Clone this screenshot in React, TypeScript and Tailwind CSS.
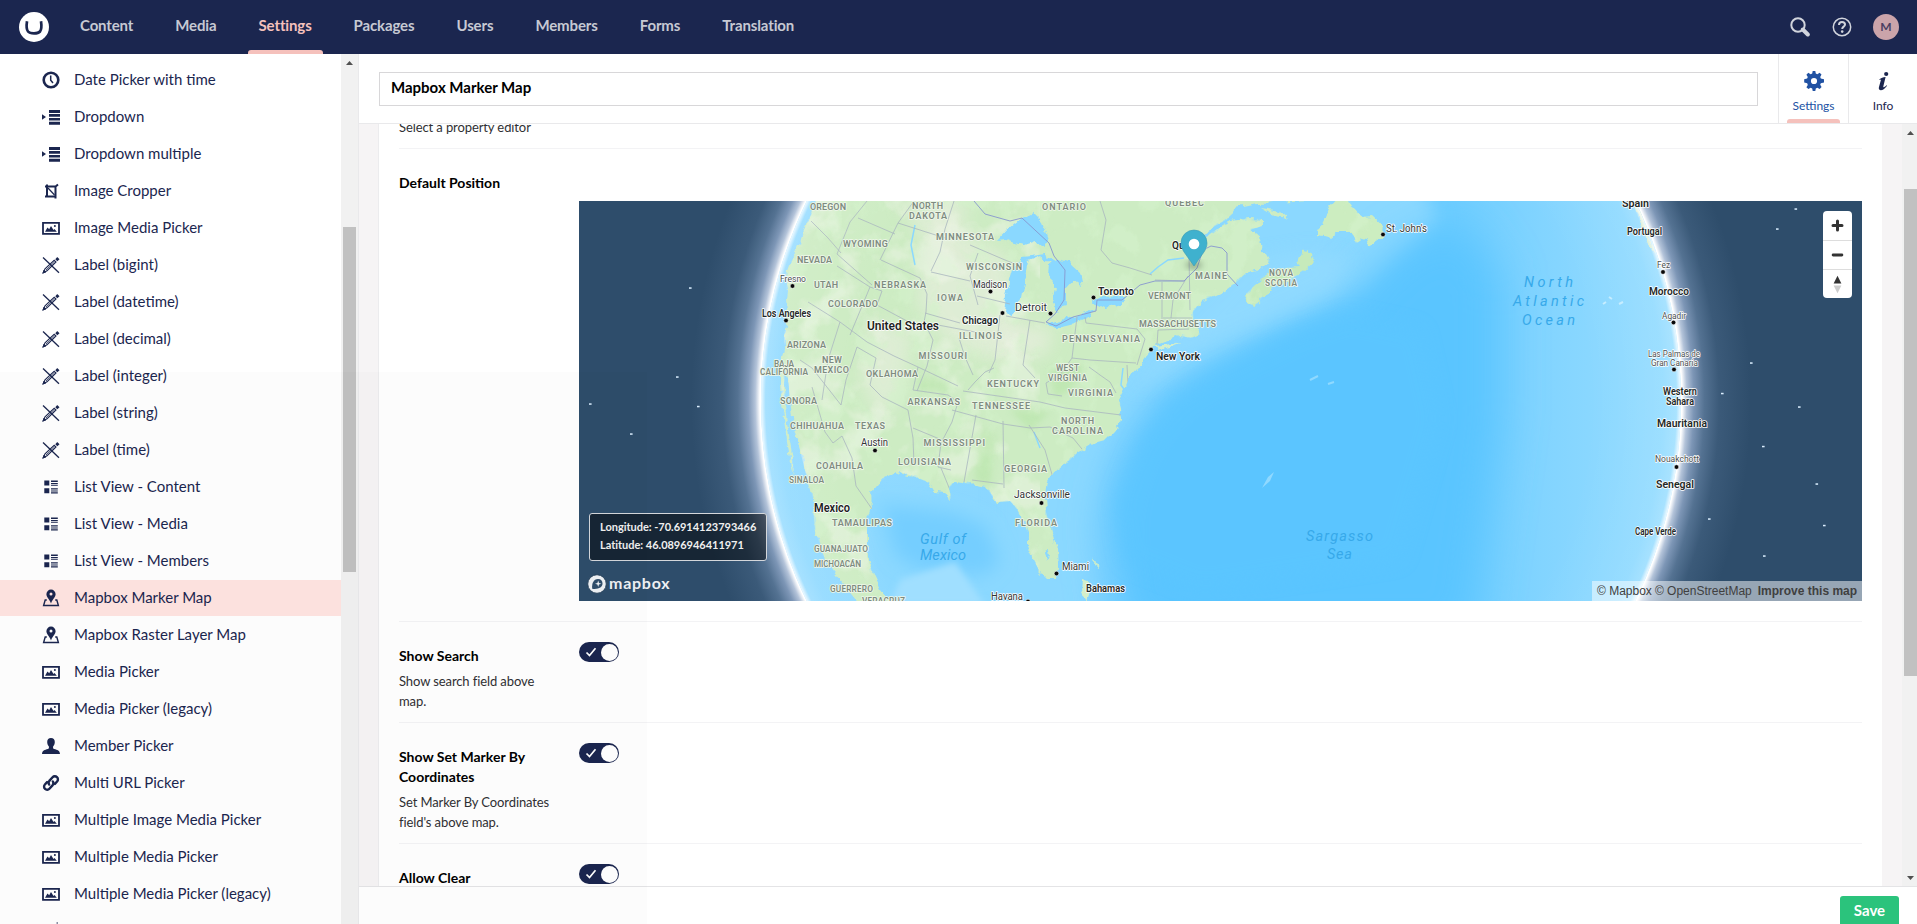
import type { ReactNode } from "react";

type IconName = "clock" | "dropdown" | "crop" | "picture" | "label" | "list" | "marker" | "user" | "link" | "numeric";

const icons: Record<IconName, ReactNode> = {
  clock: (
    <g>
      <circle cx="9" cy="9" r="7.3" fill="none" stroke="currentColor" strokeWidth="2.6" />
      <path d="M8.7 4.5V9.3L11 12" fill="none" stroke="currentColor" strokeWidth="1.5" />
    </g>
  ),
  dropdown: <path d="M0 6.2 4 9 0 11.8ZM7 2h11v3H7zM7 6.1h11v2.6H7zM7 9.9h11v2.6H7zM7 13.8h11v2.9H7z" />,
  crop: (
    <g>
      <path d="M5 2.5V14.5H13.5V4.5H3M13 5 16 2.5M13.5 13V16.5M3 14.5H6" fill="none" stroke="currentColor" strokeWidth="2" />
      <path d="M6 6 12.5 13" stroke="currentColor" strokeWidth="1.2" />
    </g>
  ),
  picture: (
    <g>
      <path d="M1 3.8h16v11H1z" fill="none" stroke="currentColor" strokeWidth="1.8" />
      <path d="M3 12.8 5.5 8.5 7.2 10.2 9 7 11.5 11 12.5 10 14.8 12.8Z" />
      <circle cx="12.9" cy="6.9" r="1" />
    </g>
  ),
  label: (
    <g>
      <path d="M1 1.5 17 16.8" fill="none" stroke="currentColor" strokeWidth="1.3" />
      <path d="M1.2 16.8 3 12.8 12.2 4.3 14 6 5 14.8Z" fill="none" stroke="currentColor" strokeWidth="1.1" />
      <path d="M4 14 12.5 6M1 17l1-3 2 2z" stroke="currentColor" strokeWidth=".8" />
      <path d="M13.3 3.2 15.2 1l2.3 2.2-2.2 2z" />
    </g>
  ),
  list: (
    <path d="M2.3 2.5h5v5h-5zM2.3 10.3h5v5h-5zM9 2.5h6.8v1.4H9zM9 5h6.8v1H9zM9 6.8h6.8v1H9zM9 10.3h6.8v1.3H9zM9 12.4h6.8v1.1H9zM9 14.3h6.8v1.2H9z" />
  ),
  marker: (
    <g>
      <path d="M9 0.6a4.6 4.6 0 0 0-4.6 4.6C4.4 8.3 7.3 9.4 9 14.5c1.7-5.1 4.6-6.2 4.6-9.3A4.6 4.6 0 0 0 9 .6Zm0 3a1.5 1.5 0 1 1 0 3 1.5 1.5 0 0 1 0-3Z" fillRule="evenodd" />
      <path d="M4.8 11H3.2L1.6 16.5H16.4L14.8 11H13.2" fill="none" stroke="currentColor" strokeWidth="1.4" />
    </g>
  ),
  user: (
    <path d="M9 .9c-2.4 0-3.8 1.5-3.8 4 0 1.8.6 3.4 1.7 4.5.2 1.5-.1 2.3-1 2.7-3.3 1-5.6 1.5-5.9 4.8h18c-.3-3.3-2.6-3.8-5.9-4.8-.9-.4-1.2-1.2-1-2.7 1.1-1.1 1.7-2.7 1.7-4.5 0-2.500-1.400-4-3.800-4Z" />
  ),
  link: (
    <g fill="none" stroke="currentColor" strokeWidth="2.4" strokeLinecap="round">
      <path d="M7.2 10.6A3 3 0 0 1 7.3 6.9L10.6 3.3A3.05 3.05 0 0 1 15.1 7.5L12.9 9.9" />
      <path d="M10.8 7.4A3 3 0 0 1 10.7 11.1L7.4 14.7A3.05 3.05 0 0 1 2.9 10.5L5.1 8.1" />
    </g>
  ),
  numeric: <path d="M14.500 0h1.500v18h-1.500z" opacity=".5" />,
};

function TreeIcon({ name }: { name: IconName }) {
  return (
    <svg viewBox="0 0 18 18" className="h-[18px] w-[18px] shrink-0 fill-current text-[#1b264f]">
      {icons[name]}
    </svg>
  );
}

const tree: [IconName, string][] = [
  ["clock", "Date Picker with time"],
  ["dropdown", "Dropdown"],
  ["dropdown", "Dropdown multiple"],
  ["crop", "Image Cropper"],
  ["picture", "Image Media Picker"],
  ["label", "Label (bigint)"],
  ["label", "Label (datetime)"],
  ["label", "Label (decimal)"],
  ["label", "Label (integer)"],
  ["label", "Label (string)"],
  ["label", "Label (time)"],
  ["list", "List View - Content"],
  ["list", "List View - Media"],
  ["list", "List View - Members"],
  ["marker", "Mapbox Marker Map"],
  ["marker", "Mapbox Raster Layer Map"],
  ["picture", "Media Picker"],
  ["picture", "Media Picker (legacy)"],
  ["user", "Member Picker"],
  ["link", "Multi URL Picker"],
  ["picture", "Multiple Image Media Picker"],
  ["picture", "Multiple Media Picker"],
  ["picture", "Multiple Media Picker (legacy)"],
  ["numeric", ""],
];

const sections = ["Content", "Media", "Settings", "Packages", "Users", "Members", "Forms", "Translation"];

function TopBar() {
  return (
    <header className="flex h-[54px] shrink-0 items-stretch bg-[#1b264f] pl-[19px] pr-[18px]">
      <div className="flex w-[30px] items-center">
        <svg viewBox="0 0 30 30" className="h-[30px] w-[30px]">
          <circle cx="15" cy="15" r="15" className="fill-white" />
          <path d="M8 9.300C7.300 14 7.300 17.500 9 19.500 10.300 21 12.500 21.400 15 21.400s4.700-.4 6-1.900c1.700-2 1.700-5.500 1-10.200" fill="none" stroke="#1b264f" strokeWidth="2.700" />
        </svg>
      </div>
      <nav className="ml-[10px] flex">
        {sections.map((s) => (
          <div
            key={s}
            className={
              s === "Settings"
                ? "relative flex items-center px-[21px] pb-[3px] text-[15px] font-bold tracking-[-0.13px] text-[#f5c1bc]"
                : "relative flex items-center px-[21px] pb-[3px] text-[15px] font-bold tracking-[-0.13px] text-[#c6c9d3]"
            }
          >
            {s}
            {s === "Settings" && <span className="absolute bottom-0 left-[10px] right-[10px] h-1 rounded-t-[3px] bg-[#f5c1bc]" />}
          </div>
        ))}
      </nav>
      <div className="ml-auto flex items-center">
        <svg viewBox="0 0 20 20" className="h-5 w-5 text-[#d1d4dc]">
          <circle cx="8" cy="8" r="6.700" fill="none" stroke="currentColor" strokeWidth="2" />
          <path d="M12.800 12.500 17.800 17.500" stroke="currentColor" strokeWidth="4" strokeLinecap="round" />
        </svg>
        <svg viewBox="0 0 20 20" className="ml-[22px] h-5 w-5 text-[#d1d4dc]">
          <circle cx="10" cy="10" r="8.700" fill="none" stroke="currentColor" strokeWidth="1.500" />
          <path d="M7 8c0-2 1.200-3 3-3s3 .9 3 2.500C13 9.700 10.200 9.600 10.200 12" fill="none" stroke="currentColor" strokeWidth="2" />
          <circle cx="10.200" cy="14.600" r="1.300" fill="currentColor" />
        </svg>
        <div className="ml-[21px] flex h-[26px] w-[26px] items-center justify-center rounded-full bg-[#cba4aa] text-[12px] font-bold text-[#4a3f62]">M</div>
      </div>
    </header>
  );
}

function Arrow({ down = false }: { down?: boolean }) {
  return (
    <svg viewBox="0 0 17 17" className="h-[17px] w-[17px] shrink-0 fill-[#505050]">
      <path d={down ? "M5 7h7L8.500 11z" : "M5 11h7L8.500 7z"} />
    </svg>
  );
}

function Sidebar() {
  return (
    <aside className="flex w-[359px] shrink-0 overflow-hidden border-r border-[#e9e9eb] bg-white">
      <ul className="flex w-[341px] flex-col gap-px pt-2">
        {tree.map(([icon, name], i) => (
          <li
            key={i}
            className={
              name === "Mapbox Marker Map"
                ? "flex h-9 shrink-0 items-center gap-[14px] bg-[#ffe4e1] pl-[42px] text-[15px] text-[#1b264f]"
                : "flex h-9 shrink-0 items-center gap-[14px] pl-[42px] text-[15px] text-[#1b264f]"
            }
          >
            <TreeIcon name={icon} />
            <span className="pb-[2px]">{name}</span>
          </li>
        ))}
      </ul>
      <div className="flex w-[17px] flex-col items-center bg-[#f1f1f1]">
        <Arrow />
        <div className="mt-[156px] h-[345px] w-[13px] bg-[#c1c1c1]" />
      </div>
    </aside>
  );
}

const LAND =
  "M818 195 811 215 803 233 799 246 794 256 789 270 787 284 785 300 787 322 784 335 784 350 781 362 781 385 782 402 784 420 787 440 790 458 794 477 793 462 790 440 787 425 785 405 784 385 785 368 788 378 790 400 793 425 800 450 806 475 812 498 815 530 823 555 837 575 848 590 860 605 890 605 880 590 873 575 867 556 867 522 872 508 871 492 880 481 890 476 900 472 916 477 929 483 935 492 944 493 951 499 949 488 954 482 971 484 986 487 996 502 1010 501 1018 510 1024 522 1028 532 1028 546 1033 558 1040 572 1047 579 1056 579 1058 568 1057 550 1051 530 1046 512 1045 495 1047 482 1056 469 1070 460 1078 452 1090 444 1105 440 1114 431 1122 420 1121 408 1119 400 1125 388 1129 378 1138 368 1146 357 1151 347 1165 341 1180 336 1191 338 1200 334 1194 322 1193 312 1202 300 1214 296 1225 291 1238 281 1246 274 1259 270 1269 262 1262 250 1260 238 1250 230 1262 226 1262 219 1250 218 1232 221 1214 231 1200 242 1188 254 1198 241 1213 227 1228 219 1234 208 1258 203 1310 200 1330 195Z";
const NOVA = "M1247 303 1246 294 1256 284 1270 274 1284 268 1297 266 1303 252 1308 250 1314 262 1303 272 1290 280 1275 285 1262 298 1255 306Z";
const LAKES =
  "M998 240 1010 227 1020 219 1033 213 1042 222 1049 240 1044 247 1036 241 1025 245 1014 243 1004 239ZM1004 313 1006 295 1013 270 1024 257 1045 254 1056 262 1046 261 1040 256 1028 261 1025 276 1021 298 1012 316ZM1050 257 1068 262 1080 273 1083 287 1074 281 1066 290 1066 301 1058 312 1052 303 1055 288 1048 275ZM1046 324 1056 321 1070 318 1096 309 1090 317 1074 324 1058 328 1050 327ZM1092 302 1101 297 1126 296 1122 304 1104 308ZM1045 553 1049 551 1050 557 1047 559Z";
const NEWFOUNDLAND = "M1340 195 1329 207 1324 220 1316 236 1331 238 1339 232 1352 232 1357 243 1367 236 1369 246 1382 238 1384 226 1373 216 1362 217 1353 207 1347 195Z";
const BORDERS =
  "M811 221 828 238 841 253M867 201 850 222M858 218 895 234M850 222 837 254 872 285M954 201 945 229M898 223 945 238M914 201 898 223 880 260M881 260 920 278 927 294M931 272 970 281M945 229 940 252 931 271M927 294 926 312 924 322 933 340 927 366 917 391M925 313 960 323M808 302 840 322 867 342 894 356 918 367 958 386M837 266 870 287 882 291 877 305 920 328M840 322 828 360 822 400M870 287 850 335M857 347 846 380 841 405 812 368 800 360M857 347 876 358 870 385 882 397 896 404 908 410 913 438 914 465M812 387 825 432 833 443 842 436 852 458 856 486 872 509M918 367 913 390 948 395 958 402 952 422 941 443 938 467 951 470M913 428 942 440M941 468 950 490M976 415 964 482M1003 421 1004 488M972 480 1003 484M952 410 1003 424 1030 428 1050 427M963 391 1040 402 1065 408 1121 415M1029 425 1045 450 1053 478M1050 427 1073 438 1086 454M994 368 985 372 975 382 968 390M959 338 965 357 973 375M1000 315 995 360 989 373M1006 316 1045 323M1030 320 1023 365 1035 378M1077 317 1072 358 1060 375 1046 383 1048 394 1062 396M1072 358 1090 360 1136 363M1085 317 1086 323 1137 329 1145 339 1137 365M1089 367 1100 375 1110 382 1116 393M1127 365 1128 384 1135 384M1158 330 1189 329M1158 330 1157 345M1162 282 1162 327M1189 255 1190 310M1163 318 1192 318M1155 280 1185 281M1188 276 1173 300 1171 318M1100 201 1106 220 1101 250 1112 263 1130 268 1152 275M970 245 1005 260 1018 265M977 296 1010 304M938 325 975 332M978 253 970 276 978 305";
const INTL =
  "M974 201 985 214 1010 221 1022 218 1049 243 1054 256 1065 270 1064 300 1055 314 1046 322 1056 326 1073 317 1096 311 1097 300 1122 300 1140 285 1155 281 1184 281 1197 268 1203 250 1211 246 1222 248 1227 253 1227 274 1238 286";

type LabelKind = "state" | "small" | "city" | "town" | "country" | "place" | "sea";
// text, left, right, vertical centre, kind
const labels: [string, number, number, number, LabelKind][] = [
  ["OREGON", 810, 846, 207, "state"], ["NORTH", 912, 943, 206, "state"], ["DAKOTA", 909, 947, 216, "state"],
  ["MINNESOTA", 936, 994, 236.5, "state"], ["WYOMING", 843, 888, 244, "state"], ["NEVADA", 797, 832, 260, "state"],
  ["Fresno", 780, 806, 279, "town"], ["UTAH", 814, 838, 284.5, "state"], ["NEBRASKA", 874, 926, 285, "state"],
  ["IOWA", 937, 963, 297.5, "state"], ["COLORADO", 828, 878, 304, "state"], ["Los Angeles", 762, 811, 313, "place"],
  ["United States", 867, 939, 325, "country"], ["ARIZONA", 787, 826, 345, "state"], ["MISSOURI", 918.5, 967, 356, "state"],
  ["NEW", 822, 842, 360, "state"], ["MEXICO", 814, 849, 370, "state"], ["BAJA", 774, 794, 364, "small"],
  ["CALIFORNIA", 760, 808, 372, "small"], ["OKLAHOMA", 866, 918, 374, "state"], ["SONORA", 780, 817, 401, "state"],
  ["ARKANSAS", 907.5, 960, 402, "state"], ["CHIHUAHUA", 790, 844, 426, "state"], ["TEXAS", 855, 885, 425.5, "state"],
  ["Austin", 861, 888, 442, "city"], ["MISSISSIPPI", 923.5, 985, 443, "state"], ["COAHUILA", 816, 863, 466, "state"],
  ["LOUISIANA", 898, 951, 462, "state"], ["SINALOA", 789, 824, 480, "small"], ["Mexico", 814, 850, 507.5, "country"],
  ["TAMAULIPAS", 832, 892, 523, "state"], ["GUANAJUATO", 814, 868, 549, "small"], ["MICHOACÁN", 814, 861, 564, "small"],
  ["GUERRERO", 830, 873, 589, "small"], ["VERACRUZ", 862, 905, 601, "small"], ["WISCONSIN", 966, 1022, 267, "state"],
  ["Madison", 973, 1007, 284.5, "city"], ["Chicago", 962, 998, 320, "place"], ["Detroit", 1015, 1047, 307, "city"],
  ["Toronto", 1098, 1134, 291, "place"], ["ILLINOIS", 959, 1002, 335.5, "state"], ["ONTARIO", 1042, 1086, 207, "state"],
  ["QUEBEC", 1165, 1204, 203, "state"], ["Quebec", 1172, 1206, 245.5, "place"], ["VERMONT", 1148, 1191, 296, "state"],
  ["MAINE", 1195, 1227, 276, "state"], ["NOVA", 1269, 1293, 273, "small"], ["SCOTIA", 1265, 1297, 283, "small"],
  ["MASSACHUSETTS", 1139, 1216, 324, "state"], ["PENNSYLVANIA", 1062, 1140, 339, "state"], ["New York", 1156, 1200, 356, "place"],
  ["WEST", 1056, 1079, 368.5, "small"], ["VIRGINIA", 1048, 1087, 378, "small"], ["VIRGINIA", 1068, 1113, 393, "state"],
  ["KENTUCKY", 987, 1039, 384, "state"], ["TENNESSEE", 972, 1030, 406, "state"], ["NORTH", 1061, 1094, 420.5, "state"],
  ["CAROLINA", 1052, 1103, 431, "state"], ["GEORGIA", 1004, 1047, 469, "state"], ["Jacksonville", 1014, 1070, 494.5, "city"],
  ["FLORIDA", 1015, 1057, 523, "state"], ["Miami", 1062, 1089, 566.5, "city"], ["Bahamas", 1086, 1125, 588.5, "place"],
  ["Havana", 991, 1023, 596.5, "city"], ["St. John's", 1386, 1427, 228, "city"], ["Gulf of", 920, 966, 539, "sea"],
  ["Mexico", 920, 966, 555, "sea"], ["Sargasso", 1306, 1373, 536, "sea"], ["Sea", 1327, 1352, 554, "sea"],
  ["North", 1524, 1573, 282, "sea"], ["Atlantic", 1513, 1584, 301, "sea"], ["Ocean", 1522, 1575, 320, "sea"],
  ["Spain", 1622, 1649, 203, "place"], ["Portugal", 1627, 1662, 231, "place"], ["Fez", 1657, 1670, 265, "town"],
  ["Morocco", 1649, 1689, 291, "place"], ["Agadir", 1662, 1686, 316, "town"], ["Las Palmas de", 1648, 1700, 354, "town"],
  ["Gran Canaria", 1651, 1698, 363, "town"], ["Western", 1663, 1697, 391, "place"], ["Sahara", 1666, 1694, 401, "place"],
  ["Mauritania", 1657, 1707, 423, "place"], ["Nouakchott", 1655, 1699, 459, "town"], ["Senegal", 1656, 1694, 484.5, "place"],
  ["Cape Verde", 1635, 1676, 531.5, "place"],
];

const labelStyle: Record<LabelKind, string> = {
  state: "fill-[#7e8b80] stroke-[#eef7ea] text-[9px] font-semibold",
  small: "fill-[#7e8b80] stroke-[#eef7ea] text-[8.3px] font-semibold",
  city: "fill-[#303534] stroke-white text-[10.8px]",
  town: "fill-[#4a5052] stroke-white text-[9.3px]",
  country: "fill-[#1d2322] stroke-white text-[13px] font-semibold",
  place: "fill-[#222827] stroke-white text-[10.5px] font-semibold",
  sea: "fill-[#37a9ea] stroke-none text-[14.5px] italic",
};
const capShift: Record<LabelKind, number> = { state: 3.3, small: 2.9, city: 3.8, town: 3.2, country: 4.5, place: 3.7, sea: 5 };

const dots: [number, number][] = [
  [792.5, 286], [786, 320.5], [875, 450.5], [990.5, 291.5], [1002.5, 313], [1050.5, 313.5], [1093.5, 297.5], [1151, 349.5],
  [1041.5, 503], [1056.5, 573.5], [1028, 601.5], [1383, 234.5], [1663, 272], [1673.5, 322.5], [1674, 369.5], [1676.5, 467],
];
const stars: [number, number][] = [
  [690, 288], [677, 377], [590, 404], [698, 406.5], [631, 434], [1795.5, 209], [1777, 229], [1751, 363], [1722, 393.5],
  [1799, 407], [1763, 446.5], [1816.5, 484], [1709, 519], [1824, 525.5], [1764, 556],
];

function Globe() {
  return (
    <svg viewBox="579 201 1283 400" className="block h-[400px] w-[1283px] font-[Roboto,sans-serif]">
      <defs>
        <radialGradient id="glow" gradientUnits="userSpaceOnUse" cx="1221" cy="401" r="530">
          <stop offset="0.862" stopColor="#fff" />
          <stop offset="0.870" stopColor="#fff" />
          <stop offset="0.879" stopColor="#b3c3d9" />
          <stop offset="0.892" stopColor="#7d96b6" />
          <stop offset="0.912" stopColor="#547292" />
          <stop offset="0.940" stopColor="#3b5a79" />
          <stop offset="1" stopColor="#2e4d6b" />
        </radialGradient>
        <radialGradient id="rim" gradientUnits="userSpaceOnUse" cx="1221" cy="401" r="461">
          <stop offset="0.800" stopColor="#fff" stopOpacity="0" />
          <stop offset="0.960" stopColor="#fff" stopOpacity="0.080" />
          <stop offset="0.988" stopColor="#fff" stopOpacity="0.180" />
          <stop offset="1" stopColor="#fff" stopOpacity="1" />
        </radialGradient>
        <linearGradient id="sea" gradientUnits="userSpaceOnUse" x1="760" y1="0" x2="1680" y2="0">
          <stop offset="0" stopColor="#94dbff" />
          <stop offset="0.420" stopColor="#84d4ff" />
          <stop offset="0.500" stopColor="#78d0ff" />
          <stop offset="0.740" stopColor="#6bccff" />
          <stop offset="0.850" stopColor="#82d4ff" />
          <stop offset="1" stopColor="#97ddff" />
        </linearGradient>
        <clipPath id="disc"><circle cx="1221" cy="401" r="460" /></clipPath>
        <clipPath id="ground"><path d={LAND} /><path d={NOVA} /><path d={NEWFOUNDLAND} /></clipPath>
        <filter id="soft" x="-30%" y="-30%" width="160%" height="160%"><feGaussianBlur stdDeviation="9" /></filter>
        <filter id="deep" x="-30%" y="-30%" width="160%" height="160%"><feGaussianBlur stdDeviation="22" /></filter>
        <filter id="shelf" x="-30%" y="-30%" width="160%" height="160%"><feGaussianBlur stdDeviation="3" /></filter>
        <filter id="coast" x="-5%" y="-5%" width="110%" height="110%">
          <feTurbulence type="fractalNoise" baseFrequency="0.110" numOctaves="3" seed="4" result="n" />
          <feDisplacementMap in="SourceGraphic" in2="n" scale="8" xChannelSelector="R" yChannelSelector="G" />
        </filter>
        <filter id="forest" x="0" y="0" width="100%" height="100%">
          <feTurbulence type="fractalNoise" baseFrequency="0.035 0.028" numOctaves="5" seed="9" />
          <feColorMatrix values="0 0 0 0 .66  0 0 0 0 .89  0 0 0 0 .6  7 0 0 0 -3.7" />
        </filter>
        <filter id="plain" x="0" y="0" width="100%" height="100%">
          <feTurbulence type="fractalNoise" baseFrequency="0.025" numOctaves="4" seed="21" />
          <feColorMatrix values="0 0 0 0 .92  0 0 0 0 .94  0 0 0 0 .86  0 5 0 0 -2.4" />
        </filter>
      </defs>
      <rect x="579" y="201" width="1283" height="400" fill="#2e4d6b" />
      <circle cx="1221" cy="401" r="530" fill="url(#glow)" />
      {stars.map(([x, y]) => (
        <rect key={x} x={x - 1} y={y - 0.7} width="2.6" height="1.5" fill="#dcefff" />
      ))}
      <g clipPath="url(#disc)">
        <rect x="755" y="195" width="935" height="412" fill="url(#sea)" />
        <path d="M1190 150 1400 150 1440 220 1370 290 1240 350 1150 395 1100 470 1085 640 1000 640 1000 150Z" fill="#8bd8ff" filter="url(#soft)" />
        <path d="M1225 360 1290 325 1350 300 1400 250 1460 220 1500 280 1500 420 1470 640 1120 640 1105 520 1125 450 1165 395Z" fill="#5ac5ff" filter="url(#deep)" />
        <path d="M1215 372 1290 335 1350 315 1420 330 1440 420 1400 560 1200 590 1125 560 1115 500 1140 440 1170 400Z" fill="#5cc6ff" opacity=".7" filter="url(#soft)" />
        <path d="M868 500 885 490 970 500 1005 520 1020 570 1060 592 1060 605 880 605Z" fill="#8bd8ff" filter="url(#shelf)" />
        <path d="M882 505 950 512 985 525 1000 560 985 575 920 570 895 555Z" fill="#74ceff" filter="url(#soft)" />
        <path d="M900 580 955 562 985 605 890 605Z" fill="#a0dfff" filter="url(#shelf)" />
        <path d="M1195 350 1270 318 1330 290 1350 260 1310 250 1250 260 1180 330 1130 390 1145 385Z" fill="#92daff" opacity=".8" filter="url(#soft)" />
        <g filter="url(#coast)">
          <path d={LAND} fill="#cdecc3" />
          <path d={NOVA} fill="#c6eabb" />
          <path d={NEWFOUNDLAND} fill="#ccedc0" />
          <path d="M1154 346 1172 344 1182 342 1170 347 1157 350Z" fill="#d4efc9" />
          <path d="M1261 208 1280 211 1288 218 1275 216Z" fill="#cdecc3" />
          <path d="M1083 579 1089 581 1090 590 1087 600 1082 590Z" fill="#d4efc9" />
          <path d="M1095 556 1098 566 1096 570 1094 562Z" fill="#c4ebcf" />
          <path d="M1632 195 1640 213 1650 237 1656 253 1650 245 1642 228 1636 212Z" fill="#d5eccf" />
        </g>
        <g clipPath="url(#ground)">
          <path d="M960 230 1010 260 1015 345 985 360 945 340 915 300 930 250 900 200 970 200Z" fill="#e6eedd" opacity=".7" filter="url(#soft)" />
          <path d="M1000 320 1055 330 1045 355 995 362Z" fill="#e6eedd" opacity=".8" filter="url(#soft)" />
          <path d="M870 320 915 330 900 400 880 420 860 380Z" fill="#e4eedb" opacity=".7" filter="url(#soft)" />
          <rect x="760" y="200" width="630" height="402" filter="url(#forest)" opacity=".6" />
          <rect x="760" y="200" width="280" height="402" filter="url(#plain)" opacity=".4" />
          <path d="M1050 370 1085 365 1070 390 1055 397ZM980 430 995 435 990 485 975 480ZM920 375 945 380 950 392 920 390ZM1010 410 1050 412 1030 430Z" fill="#b2e3a3" opacity=".5" filter="url(#shelf)" />
        </g>
        <path d={LAKES} fill="#8ad8ff" filter="url(#coast)" />
        <path d="M1184 258 1168 260 1158 267 1150 274M915 225 911 245 915 265M1123 368 1121 385 1126 392M1034 432 1040 448" fill="none" stroke="#8ad8ff" strokeWidth="1.5" />
        <path d={BORDERS} fill="none" stroke="#a9b6bf" strokeWidth="0.8" clipPath="url(#ground)" />
        <path d={INTL} fill="none" stroke="#8796cf" strokeWidth="0.9" />
        <path d="M1262 488 1268 477 1274 472 1270 481Z" fill="#a6e1ff" opacity=".7" />
        <path d="M1603 304 1606 302M1609 297 1612 299M1619 304 1623 302" stroke="#c4ecff" strokeWidth="2" />
        <path d="M1310 380 1318 376M1328 384 1334 382" stroke="#8fd9ff" strokeWidth="2" />
        <circle cx="1221" cy="401" r="461" fill="url(#rim)" />
      </g>
      {dots.map(([x, y]) => (
        <circle key={y} cx={x} cy={y} r="2.3" fill="#080808" stroke="#fff" strokeWidth="0.5" />
      ))}
      {labels.map(([text, left, right, cy, kind], i) => (
        <text
          key={i}
          x={left}
          y={cy + capShift[kind]}
          textLength={right - left}
          lengthAdjust={kind === "state" || kind === "small" || kind === "sea" ? "spacing" : "spacingAndGlyphs"}
          className={labelStyle[kind]}
          strokeWidth="1.6"
          strokeLinejoin="round"
          paintOrder="stroke"
        >
          {text}
        </text>
      ))}
      <ellipse cx="1194" cy="265" rx="8.5" ry="3.5" fill="#4d5f4a" opacity=".5" filter="url(#shelf)" />
      <path d="M1194 266 1184 252C1181 247 1181 244 1181 243a13 13 0 0 1 26 0c0 3-1 6-3 9Z" fill="#3fb1ce" stroke="#3a9ab3" strokeWidth=".6" />
      <circle cx="1194" cy="244" r="5.3" fill="#fff" />
    </svg>
  );
}

function MapView() {
  return (
    <div className="relative h-[400px] w-[1283px] overflow-hidden">
      <Globe />
      <div className="absolute left-[10px] top-[312px] flex h-12 w-[178px] flex-col justify-center rounded-[3px] border border-[#d4d7db] bg-black/50 pb-[2px] pl-[10px] text-[11px] font-bold leading-[18px] tracking-[-0.02px] text-[#f0f0f0]">
        <span>Longitude: -70.6914123793466</span>
        <span>Latitude: 46.0896946411971</span>
      </div>
      <div className="absolute left-[8px] top-[372px] flex items-center gap-[2px]">
        <svg viewBox="0 0 20 20" className="h-5 w-5">
          <circle cx="10" cy="10" r="9.3" fill="#eef1f4" stroke="#27425c" strokeWidth="1" />
          <path d="M5.2 14.8C4.6 9.5 6.5 5 11 5a4.700 4.700 0 0 1 4.500 4.600c0 4-4.500 6-10.300 5.200Z" fill="#2e4d6b" />
          <path d="M11.200 6.500 12 9 14.400 9.700 12 10.400 11.200 12.900 10.400 10.400 8 9.700 10.400 9Z" fill="#eef1f4" />
        </svg>
        <span className="pb-px text-[16px] font-bold leading-5 tracking-[0.75px] text-[#eef1f4]">mapbox</span>
      </div>
      <div className="absolute right-[10px] top-[10px] flex w-[29px] flex-col overflow-hidden rounded bg-white text-[#333]">
        <svg viewBox="0 0 29 29" className="h-[29px] w-[29px]">
          <path d="M14.500 10v9M10 14.500h9" stroke="currentColor" strokeWidth="3" strokeLinecap="round" />
        </svg>
        <svg viewBox="0 0 29 29" className="h-[29px] w-[29px] border-t border-[#ddd]">
          <path d="M10 14.500h9" stroke="currentColor" strokeWidth="3" strokeLinecap="round" />
        </svg>
        <svg viewBox="0 0 29 29" className="h-[29px] w-[29px] border-t border-[#ddd]">
          <path d="M10.500 14h8l-4-8z" fill="#333" />
          <path d="M10.500 16h8l-4 8z" fill="#ccc" />
        </svg>
      </div>
      <div className="absolute bottom-0 right-0 flex h-5 w-[270px] items-center gap-[3px] whitespace-nowrap bg-white/50 pl-[5px] font-['Liberation_Sans',sans-serif] text-[12px] text-[#404040]">
        <span>© Mapbox</span>
        <span>© OpenStreetMap</span>
        <span className="pl-[3px] font-bold">Improve this map</span>
      </div>
    </div>
  );
}

function Toggle() {
  return (
    <div className="flex h-5 w-10 items-center justify-between rounded-full bg-[#1b264f] pl-[6px] pr-[1.5px]">
      <svg viewBox="0 0 12 12" className="h-3 w-3">
        <path d="M1.500 6.500 4.500 9.500 10.500 2.300" fill="none" stroke="#fff" strokeWidth="1.700" />
      </svg>
      <div className="h-[17px] w-[17px] rounded-full bg-white" />
    </div>
  );
}

function Setting({ title, text, children }: { title: string; text?: string; children: ReactNode }) {
  return (
    <div className="flex border-b border-[#f3f3f5] pb-[11px] pt-5">
      <div className="w-[180px] shrink-0 pr-5 pt-1">
        <div className="text-[14px] font-bold leading-5 text-black">{title}</div>
        {text && <div className="mt-[5px] text-[13px] leading-5 tracking-[-0.1px] text-[#303033]">{text}</div>}
      </div>
      {children}
    </div>
  );
}

function EditorHeader() {
  return (
    <div className="flex h-[70px] shrink-0 border-b border-[#e9e9eb] bg-white pl-5">
      <div className="mt-[18px] flex h-[34px] w-[1379px] items-center border border-[#d8d7d9] pb-[3px] pl-[11px] text-[15px] font-bold text-black">
        Mapbox Marker Map
      </div>
      <div className="relative ml-5 flex w-[70px] flex-col items-center border-l border-[#e9e9eb] pt-[17px] text-[#2152a3]">
        <svg viewBox="0 0 20 20" className="h-5 w-5 fill-current">
          <path
            fillRule="evenodd"
            d="m8.700 0h2.600l.5 2.600 1.500.6L15.600 1.800l1.900 1.800-1.300 2.300.6 1.600 3.200.8v3.200l-3.200.8-.6 1.500 1.400 2.200-1.900 2-2.300-1.300-1.600.7-.5 2.600H8.700l-.5-2.600-1.600-.7-2.200 1.400-2-1.900 1.400-2.300-.6-1.600L.2 11.500V8.300l2.900-.8.7-1.600-1.400-2.200 1.900-1.900 2.300 1.400 1.600-.6zM10 6.900a3.100 3.100 0 1 0 0 6.200 3.100 3.100 0 0 0 0-6.200z"
          />
        </svg>
        <span className="mt-[6px] text-[12px] leading-[18px]">Settings</span>
        <span className="absolute bottom-0 left-2 h-1 w-[53px] rounded-t-[3px] bg-[#f5c1bc]" />
      </div>
      <div className="flex w-[69px] flex-col items-center border-l border-[#e9e9eb] pt-[17px] text-[#1b264f]">
        <svg viewBox="0 0 20 20" className="h-5 w-5 fill-current">
          <circle cx="13.200" cy="3" r="2.100" />
          <path d="M6.300 8.600C8 6.900 10 6 12.600 5.900L10.300 15.500c-.3 1.400.8 1.100 3.300-1.300l.5.600C11.600 18 9.700 19.200 7.900 19.200c-1.700 0-2.400-1.200-2-2.900L7.900 9.100c.2-.9-.3-.8-1.200 0Z" />
        </svg>
        <span className="mt-[6px] text-[12px] leading-[18px]">Info</span>
      </div>
    </div>
  );
}

export default function App() {
  return (
    <div className="relative flex h-[924px] w-[1917px] flex-col overflow-hidden bg-white font-[Lato,sans-serif]">
      <TopBar />
      <div className="flex min-h-0 flex-1">
        <Sidebar />
        <main className="flex min-w-0 flex-1 flex-col">
          <EditorHeader />
          <div className="flex h-[762px] shrink-0 overflow-hidden bg-[#f6f4f5] pl-[19px]">
            <div className="flex w-[1504px] shrink-0 flex-col border-l border-[#ececee] bg-white px-5">
              <div className="flex h-[25px] flex-col justify-end border-b border-[#f3f3f5] pb-[11px] text-[13px] leading-5 tracking-[-0.1px] text-[#303033]">
                Select a property editor
              </div>
              <div className="border-b border-[#f3f3f5] pb-5 pt-6">
                <div className="h-7 text-[14px] font-bold leading-5 text-black">Default Position</div>
                <div className="pl-[180px]">
                  <MapView />
                </div>
              </div>
              <Setting title="Show Search" text="Show search field above map."><Toggle /></Setting>
              <Setting title="Show Set Marker By Coordinates" text="Set Marker By Coordinates field's above map."><Toggle /></Setting>
              <Setting title="Allow Clear"><Toggle /></Setting>
            </div>
            <div className="ml-5 flex w-[17px] shrink-0 flex-col items-center bg-[#f1f1f1]">
              <Arrow />
              <div className="mt-12 h-[487px] w-[13px] bg-[#c1c1c1]" />
              <div className="mt-auto"><Arrow down /></div>
            </div>
          </div>
          <footer className="flex h-[38px] items-start justify-end border-t border-[#e4e4e6] bg-white pr-[18px] pt-[9px]">
            <button className="h-8 w-[59px] shrink-0 rounded-[3px] bg-[#2bc37c] pb-[3px] text-[15px] font-bold text-white">Save</button>
          </footer>
        </main>
      </div>
      <div className="pointer-events-none absolute bottom-0 left-0 h-[552px] w-[647px] bg-black/[0.012]" />
    </div>
  );
}
